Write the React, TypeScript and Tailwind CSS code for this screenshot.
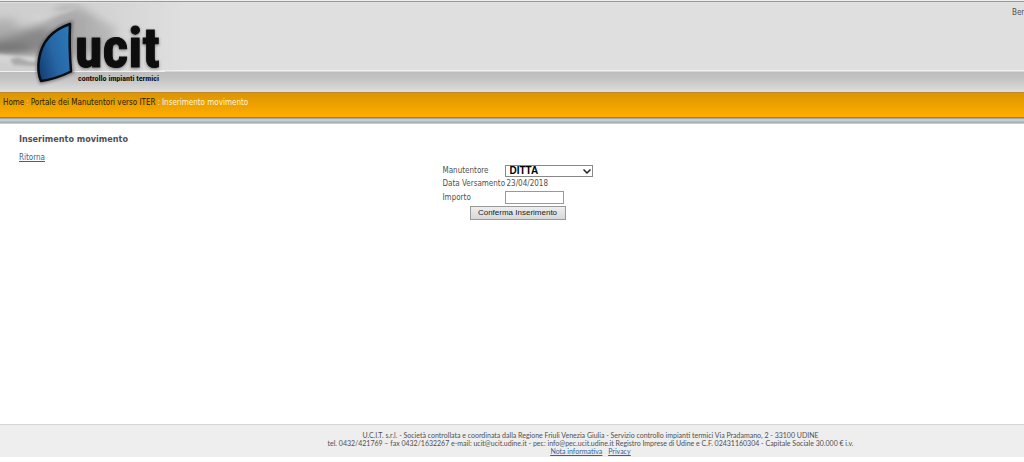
function Logo() {
  return (
    <svg className="block h-[91px] w-[200px]" viewBox="0 0 200 91" role="img" aria-label="ucit controllo impianti termici">
      <defs>
        <linearGradient id="sail" x1="0" y1="0.8" x2="1" y2="0.3">
          <stop offset="0" stopColor="#123f73" />
          <stop offset="0.5" stopColor="#2867a6" />
          <stop offset="1" stopColor="#2b78b8" />
        </linearGradient>
        <linearGradient id="fadeRight" x1="0" x2="1">
          <stop offset="0.4" stopColor="#fff" />
          <stop offset="0.95" stopColor="#000" />
        </linearGradient>
        <mask id="skyMask">
          <rect width="190" height="91" fill="url(#fadeRight)" />
        </mask>
        <filter id="cloud" x="-30%" y="-50%" width="160%" height="200%">
          <feGaussianBlur stdDeviation="4" />
        </filter>
        <filter id="wisp" x="-30%" y="-50%" width="160%" height="200%">
          <feGaussianBlur stdDeviation="1.5" />
        </filter>
        <filter id="glow" x="-20%" y="-20%" width="140%" height="140%">
          <feGaussianBlur stdDeviation="1.6" />
        </filter>
        <filter id="shadow" x="-20%" y="-20%" width="140%" height="140%">
          <feDropShadow dx="0" dy="1" stdDeviation="1.8" floodColor="#333" floodOpacity="0.6" />
        </filter>
        <clipPath id="sky">
          <rect y="2" width="200" height="68" />
        </clipPath>
      </defs>
      <g mask="url(#skyMask)">
        <g clipPath="url(#sky)">
          <rect width="190" height="70" fill="#cfcfcf" />
          <g filter="url(#cloud)">
            <path d="M-10 26Q15 28 30 26T54 14L84 8L100 18L118 28L110 46Q90 56 70 56T30 54T-10 54Z" fill="#a8a8a8" />
            <path d="M-10 40Q10 36 26 30T50 28L46 50Q30 54 -10 54Z" fill="#888" />
            <ellipse cx="8" cy="48" rx="24" ry="5" fill="#6f6f6f" />
            <ellipse cx="5" cy="22" rx="14" ry="5" fill="#b4b4b4" />
            <ellipse cx="70" cy="9" rx="15" ry="5" fill="#b2b2b2" />
          </g>
          <g filter="url(#wisp)">
            <path d="M-3 53Q14 55 38 57L38 62Q18 65 -3 61Z" fill="#d4d4d4" />
            <path d="M10 59Q16 54 23 58T37 60L35 65L14 64Z" fill="#aaa" />
            <path d="M28 18Q38 11 52 10T78 6L66 12Q50 17 40 20Z" fill="#d4d4d4" opacity="0.6" />
          </g>
        </g>
      </g>
      <path d="M0 70.5H165" stroke="#f0f0f0" />
      <path d="M71 22Q42 31 38 59Q37 72 41 81Q57 78 72 71Q69 46 71 22Z" fill="#555" stroke="#555" strokeWidth="4" filter="url(#glow)" opacity="0.6" />
      <path d="M70 23Q43 32 39 58Q37 71 41 80Q56 78 71 70.500Q69 46 70 23Z" fill="url(#sail)" stroke="#080d13" strokeWidth="2.500" strokeLinejoin="round" />
      <g fontFamily="'Liberation Sans Narrow', 'Roboto Condensed', 'Liberation Sans', sans-serif" fontWeight="700">
        <text x="75" y="66" fontSize="56" fill="#080808" stroke="#080808" strokeWidth="1" filter="url(#shadow)">ucit</text>
        <text x="78" y="80" fontSize="8" fill="#111">controllo impianti termici</text>
      </g>
    </svg>
  );
}

export default function App() {
  return (
    <div className="flex min-h-screen flex-col bg-white pb-[5px] font-['DejaVu_Sans_Condensed','DejaVu_Sans',sans-serif] text-[8px] leading-[10px] text-[#505050]">
      <header className="flex items-start justify-between border-t border-[#eee] bg-[linear-gradient(to_bottom,#999_0px,#999_1px,#dfdfdf_1px,#dfdfdf_69px,#f0f0f0_69px,#f0f0f0_70px,#bdbdbd_71px,#c4c4c4_78px,#dcdcdc_90px)]">
        <Logo />
        <span className="w-3 overflow-hidden pt-[7px] whitespace-nowrap">Benvenuto</span>
      </header>
      <nav aria-label="Percorso" className="flex h-[25px] items-center gap-0.5 border-t border-[#c08a28] bg-linear-to-b from-[#dc9500] to-[#ffae00] px-[3px] pb-1 text-[#251b08]">
        <a href="#home">Home</a>
        <span className="text-[#ffd36b]">:</span>
        <a href="#portale">Portale dei Manutentori verso ITER</a>
        <span className="text-[#ffe3a0]">:</span>
        <span className="text-[#fff6df]">Inserimento movimento</span>
      </nav>
      <div className="h-[7px] bg-[linear-gradient(to_bottom,#858574_0px,#858574_1px,#c3cbdc_2px,#c3cbdc_4px,#9db4b0_5px,#9db4b0_6px,#e7eeec_7px)]" />
      <main className="grow px-[19px] pt-[9px]">
        <h1 className="text-[9px] leading-3 font-bold">Inserimento movimento</h1>
        <a href="#ritorna" className="mt-2 inline-block text-[#31659c] underline">Ritorna</a>
        <div className="mt-0.5 pl-3">
          <form className="mx-auto flex w-[151px] flex-col" onSubmit={(e) => e.preventDefault()}>
            <div className="grid grid-cols-[62px_auto] items-center justify-items-start gap-y-px">
              <label htmlFor="manutentore">Manutentore</label>
              <div className="relative">
                <select id="manutentore" className="block h-3 w-[88px] appearance-none border border-[#888] bg-white pl-1 font-['Liberation_Sans',sans-serif] text-[10px] leading-[10px] font-bold text-black">
                  <option>DITTA</option>
                </select>
                <svg className="pointer-events-none absolute top-1 right-0.5 h-[5px] w-2" viewBox="0 0 8 5" fill="none" stroke="#222" strokeWidth="1.500">
                  <path d="M0.500 0.500L4 4L7.500 0.500" />
                </svg>
              </div>
              <span className="py-px whitespace-nowrap">Data Versamento</span>
              <span className="pl-0.5">23/04/2018</span>
              <label htmlFor="importo">Importo</label>
              <input id="importo" type="text" className="block h-[13px] w-[59px] border border-[#999] bg-white px-0.5" />
            </div>
            <button type="submit" className="mt-0.5 ml-[27px] h-[14px] w-[96px] border border-[#999] bg-linear-to-b from-[#eee] to-[#d8d8d8] font-['Liberation_Sans',sans-serif] leading-3 whitespace-nowrap text-[#222]">Conferma Inserimento</button>
          </form>
        </div>
      </main>
      <footer className="border-t border-[#d5d5d5] bg-[#eee] pt-[6px] pb-0.5 pl-[157px] text-center font-[Lato,'Liberation_Sans',sans-serif] text-[7px] leading-2">
        <p>U.C.I.T. s.r.l. - Società controllata e coordinata dalla Regione Friuli Venezia Giulia - Servizio controllo impianti termici Via Pradamano, 2 - 33100 UDINE</p>
        <p>tel. 0432/421769 – fax 0432/1632267 e-mail: ucit@ucit.udine.it - pec: info@pec.ucit.udine.it Registro Imprese di Udine e C.F. 02431160304 - Capitale Sociale 30.000 € i.v.</p>
        <p className="flex justify-center gap-[6px] text-[#31659c] underline">
          <a href="#nota">Nota informativa</a>
          <a href="#privacy">Privacy</a>
        </p>
      </footer>
    </div>
  );
}
